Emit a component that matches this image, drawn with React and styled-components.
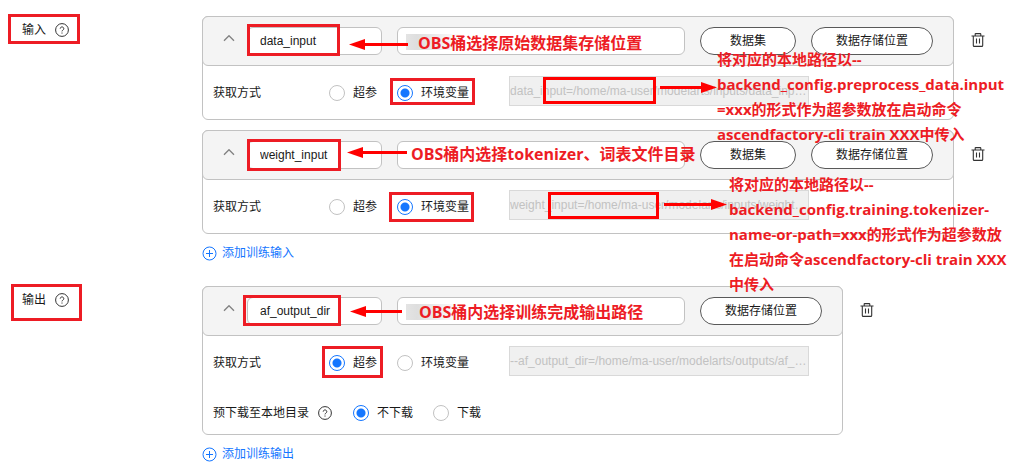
import { useState } from "react";
import styled, { createGlobalStyle } from "styled-components";

const GlobalStyle = createGlobalStyle`
    *{
        box-sizing: border-box;
    }
    body{
        margin: 0;
        background: #fff;
        color: #191919;
        font: 12px/18px "Liberation Sans", "Noto Sans CJK SC", sans-serif;
    }
    button, input{
        margin: 0;
        color: inherit;
        font: inherit;
    }
`

const Page = styled.main`
    position: relative;
    display: flex;
    flex-direction: column;
    gap: 24px;
    padding: 16px 0 8px 22px;
`

const Section = styled.section`
    display: grid;
    grid-template-columns: 180px 1fr;
`

const SectionTitle = styled.h2`
    display: flex;
    align-items: center;
    gap: 9px;
    height: 28px;
    margin: 0;
    font-size: 12px;
    font-weight: 400;
`

const Stack = styled.div`
    display: flex;
    flex-direction: column;
    align-items: flex-start;
    gap: 10px;
`

const Entry = styled.div`
    display: flex;
    align-items: flex-start;
    gap: 10px;
`

const Card = styled.div`
    border: 1px solid #c2c2c2;
    border-radius: 6px;
`

const CardHead = styled.div`
    display: flex;
    align-items: center;
    gap: 12px;
    height: 50px;
    margin: -1px -1px 0;
    padding: 0 20px;
    background: #f4f4f4;
    border: 1px solid #c2c2c2;
    border-radius: 6px;
`

const Fields = styled.div`
    display: flex;
    gap: 15px;
`

const CardBody = styled.div`
    display: flex;
    flex-direction: column;
    gap: 16px;
    padding: 10px 10px ${props => props.$tight ? "4px" : "9px"};
`

const IconButton = styled.button`
    display: flex;
    align-items: center;
    justify-content: center;
    flex: none;
    width: ${props => props.$width};
    height: ${props => props.$height};
    padding: 0;
    background: none;
    border: 0;
    cursor: pointer;
`

const TextInput = styled.input`
    width: ${props => props.$width};
    height: 28px;
    padding: 0 12px;
    background: #fff;
    border: 1px solid #c2c2c2;
    border-radius: 6px;
    outline: 0;
`

const PathInput = styled(TextInput)`
    background: ${props => props.$masked
        ? "linear-gradient(90deg, #e4e4e4, #dedede 20%, #fff) 8px 6px / 56px 16px no-repeat #fff"
        : "#fff"};
`

const PillButton = styled.button`
    height: 28px;
    padding: 0 ${props => props.$wide ? "24px" : "29px"};
    background: #fff;
    border: 1px solid #595959;
    border-radius: 14px;
    cursor: pointer;
`

const Row = styled.div`
    display: flex;
    align-items: flex-start;
    height: 34px;
`

const RowLabel = styled.span`
    display: flex;
    align-items: center;
    gap: 9px;
    width: ${props => props.$width};
    height: 34px;
`

const RadioGroup = styled.div`
    display: flex;
    gap: 20px;
    margin-right: 40px;
`

const RadioLabel = styled.label`
    display: flex;
    align-items: center;
    gap: 8px;
    height: 34px;
    cursor: pointer;
`

const Radio = styled.input`
    appearance: none;
    width: 16px;
    height: 16px;
    background: #fff;
    border: 1px solid #c2c2c2;
    border-radius: 50%;
    &:checked{
        background: radial-gradient(circle, #1476ff 4px, #fff 5px);
        border-color: #1476ff;
    }
`

const Preview = styled.input`
    width: 300px;
    height: 30px;
    padding: 0;
    background: #f0f0f0;
    border: 1px solid #d9d9d9;
    color: #c2c2c2;
    text-overflow: ellipsis;
`

const AddButton = styled.button`
    display: flex;
    align-items: center;
    gap: 5px;
    height: 18px;
    padding: 0;
    background: none;
    border: 0;
    color: #1476ff;
    cursor: pointer;
`

const Mark = styled.div`
    position: absolute;
    left: ${props => props.$x}px;
    top: ${props => props.$y}px;
    width: ${props => props.$w}px;
    height: ${props => props.$h}px;
    border: 3px solid ${props => props.$color || "#ed1c24"};
    pointer-events: none;
`

const ArrowSvg = styled.svg`
    position: absolute;
    left: ${props => props.$x}px;
    top: ${props => props.$y}px;
    pointer-events: none;
`

const Note = styled.p`
    position: absolute;
    left: ${props => props.$x}px;
    top: ${props => props.$y}px;
    margin: 0;
    color: #ed1c24;
    font-family: "Open Sans", "Noto Sans CJK SC", sans-serif;
    font-size: ${props => props.$size}px;
    font-weight: 700;
    line-height: 25px;
    white-space: nowrap;
    pointer-events: none;
`

const marks = [
    { x: 8, y: 14, w: 72, h: 30 },
    { x: 247, y: 24, w: 93, h: 32 },
    { x: 390, y: 78, w: 85, h: 27 },
    { x: 543, y: 77, w: 113, h: 27, color: "#ff0000" },
    { x: 247, y: 139, w: 94, h: 32 },
    { x: 389, y: 192, w: 85, h: 30 },
    { x: 548, y: 192, w: 111, h: 27, color: "#ff0000" },
    { x: 11, y: 284, w: 71, h: 37 },
    { x: 243, y: 295, w: 98, h: 31 },
    { x: 322, y: 346, w: 61, h: 32 },
]

const arrows = [
    { x: 349, y: 39, length: 59, left: true },
    { x: 660, y: 82, length: 57 },
    { x: 347, y: 147, length: 60, left: true },
    { x: 664, y: 199, length: 63 },
    { x: 350, y: 306, length: 52, left: true },
]

const notes = [
    { x: 418, y: 31, size: 16, lines: ["OBS桶选择原始数据集存储位置"] },
    { x: 411, y: 142, size: 16, lines: ["OBS桶内选择tokenizer、词表文件目录"] },
    { x: 419, y: 300, size: 16, lines: ["OBS桶内选择训练完成输出路径"] },
    {
        x: 717, y: 47, size: 15,
        lines: [
            "将对应的本地路径以--",
            "backend_config.preprocess_data.input",
            "=xxx的形式作为超参数放在启动命令",
            "ascendfactory-cli train XXX中传入",
        ],
    },
    {
        x: 729, y: 172, size: 15,
        lines: [
            "将对应的本地路径以--",
            "backend_config.training.tokenizer-",
            "name-or-path=xxx的形式作为超参数放",
            "在启动命令ascendfactory-cli train XXX",
            "中传入",
        ],
    },
]

function HelpIcon(){
    return (
        <svg width="14" height="14" viewBox="0 0 14 14" fill="none" stroke="#333">
            <circle cx="7" cy="7" r="6.4" />
            <path d="M5.2 5.6a1.8 1.7 0 1 1 2.7 1.5Q7 7.6 7 8.4M7 9.5v1.1" />
        </svg>
    )
}

function ChevronIcon(){
    return (
        <svg width="12" height="12" viewBox="0 0 12 12" fill="none" stroke="#808080" strokeWidth="1.3">
            <path d="M1 5.7 6 .7l5 5" />
        </svg>
    )
}

function TrashIcon(){
    return (
        <svg width="14" height="14" viewBox="0 0 14 14" fill="none" stroke="#333" strokeWidth="1.1">
            <path d="M.5 3h13M4.2 3V1.2q0-.6.6-.6h4.4q.6 0 .6.6V3" />
            <path d="M2.3 3v9.4q0 1 1 1h7.4q1 0 1-1V3M5.5 5.6v5M8.5 5.6v5" />
        </svg>
    )
}

function PlusIcon(){
    return (
        <svg width="15" height="15" viewBox="0 0 15 15" fill="none" stroke="#1476ff">
            <circle cx="7.5" cy="7.5" r="6.5" />
            <path d="M7.5 4v7M4 7.5h7" />
        </svg>
    )
}

function Arrow({ x, y, length, left }){
    const line = left ? `M14 5.5H${length}` : `M0 5.5H${length - 14}`;
    const head = left ? "M0 5.5 16 0V11Z" : `M${length} 5.5 ${length - 16} 0V11Z`;
    return (
        <ArrowSvg $x={x} $y={y} width={length} height="11" aria-hidden="true">
            <path d={line} stroke="#ff0000" strokeWidth="3" />
            <path d={head} fill="#ff0000" />
        </ArrowSvg>
    )
}

function Radios({ name, label, options, initial }){
    const [value, setValue] = useState(initial);
    return (
        <RadioGroup role="radiogroup" aria-label={label}>
            {options.map((item) => (
                <RadioLabel key={item}>
                    <Radio type="radio" name={name} checked={value === item} onChange={() => setValue(item)} />
                    {item}
                </RadioLabel>
            ))}
        </RadioGroup>
    )
}

function ChannelCard({ name, masked, buttons, mode, preview, download }){
    const [title, setTitle] = useState(name);
    const [path, setPath] = useState("");
    return (
        <Entry>
            <Card>
                <CardHead>
                    <IconButton $width="12px" $height="18px" aria-label="收起">
                        <ChevronIcon />
                    </IconButton>
                    <Fields>
                        <TextInput $width="135px" aria-label="名称" value={title} onChange={(e) => setTitle(e.target.value)} />
                        <PathInput $width="288px" $masked={masked} aria-label="存储路径" value={path} onChange={(e) => setPath(e.target.value)} />
                        {buttons.map((item) => (
                            <PillButton key={item} $wide={item.length > 3}>{item}</PillButton>
                        ))}
                    </Fields>
                </CardHead>
                <CardBody $tight={download}>
                    <Row>
                        <RowLabel $width="116px">获取方式</RowLabel>
                        <Radios name={name + "-mode"} label="获取方式" options={["超参", "环境变量"]} initial={mode} />
                        <Preview disabled aria-label="参数预览" value={preview} />
                    </Row>
                    {download && (
                        <Row>
                            <RowLabel $width="140px">预下载至本地目录 <HelpIcon /></RowLabel>
                            <Radios name={name + "-download"} label="预下载至本地目录" options={["不下载", "下载"]} initial="不下载" />
                        </Row>
                    )}
                </CardBody>
            </Card>
            <IconButton $width="28px" $height="48px" aria-label="删除">
                <TrashIcon />
            </IconButton>
        </Entry>
    )
}

export default function App(){
    return (
        <Page>
            <GlobalStyle />
            <Section>
                <SectionTitle>输入 <HelpIcon /></SectionTitle>
                <Stack>
                    <ChannelCard
                        name="data_input"
                        masked
                        buttons={["数据集", "数据存储位置"]}
                        mode="环境变量"
                        preview="data_input=/home/ma-user/modelarts/inputs/data_input_0"
                    />
                    <ChannelCard
                        name="weight_input"
                        buttons={["数据集", "数据存储位置"]}
                        mode="环境变量"
                        preview="weight_input=/home/ma-user/modelarts/inputs/weight_input_0"
                    />
                    <AddButton><PlusIcon />添加训练输入</AddButton>
                </Stack>
            </Section>
            <Section>
                <SectionTitle>输出 <HelpIcon /></SectionTitle>
                <Stack>
                    <ChannelCard
                        name="af_output_dir"
                        masked
                        buttons={["数据存储位置"]}
                        mode="超参"
                        preview="--af_output_dir=/home/ma-user/modelarts/outputs/af_output_dir_0"
                        download
                    />
                    <AddButton><PlusIcon />添加训练输出</AddButton>
                </Stack>
            </Section>
            {marks.map((m, index) => (
                <Mark key={index} $x={m.x} $y={m.y} $w={m.w} $h={m.h} $color={m.color} />
            ))}
            {arrows.map((a, index) => (
                <Arrow key={index} {...a} />
            ))}
            {notes.map((n, index) => (
                <Note key={index} $x={n.x} $y={n.y} $size={n.size}>
                    {n.lines.map((line, i) => (
                        <span key={i}>{line}{i < n.lines.length - 1 && <br />}</span>
                    ))}
                </Note>
            ))}
        </Page>
    )
}
